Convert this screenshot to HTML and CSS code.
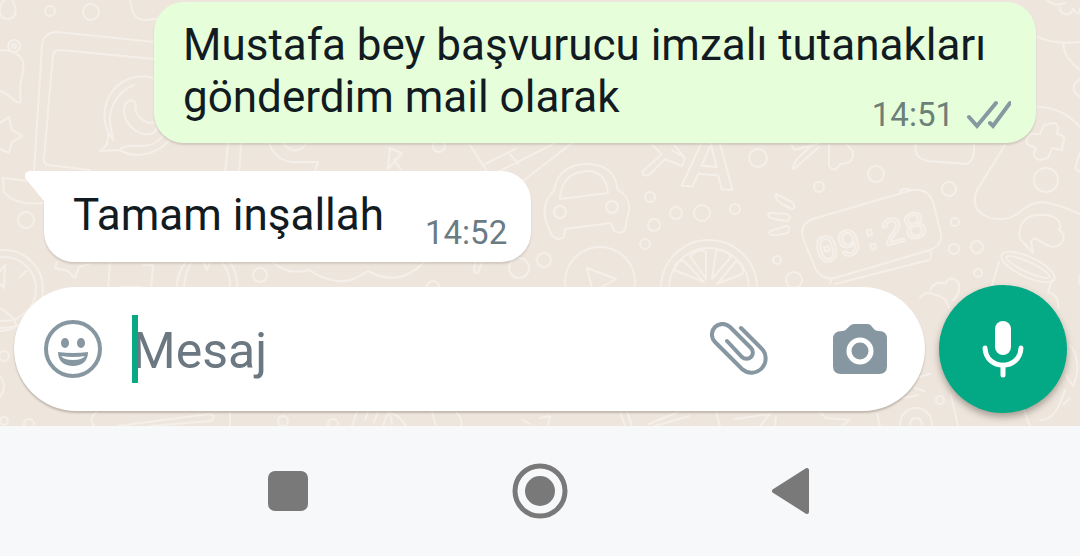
FILE: index.html
```html
<!DOCTYPE html>
<html lang="tr">
<head>
<meta charset="utf-8">
<meta name="viewport" content="width=device-width, initial-scale=1">
<title>Sohbet</title>
<link rel="stylesheet" href="styles.css">
</head>
<body>
<div class="phone">
  <main class="chat">
    <svg class="wallpaper" viewBox="0 0 1080 426" preserveAspectRatio="xMidYMax slice" aria-hidden="true">
      <!-- laptop, ghost, stars and drops -->
      <path d="M4 0C-2 8-2 19 8 19C18 18 17 8 12 0M130 0C132 10 133 20 145 20L165 18M34 172L42 45Q44 32 57 32L165 43M90 170L48 165Q43 164 44 158L53 55Q54 50 60 50L165 60"/>
      <path d="M0 50C10 50 20 53 23 62C26 73 17 80 21 102C13 104 11 94 0 91M0 123L9 117L12 130L22 136L12 142L9 153L0 149"/>
      <path d="M113 140C96 117 106 87 131 78C160 69 184 97 177 124C170 151 141 162 119 150L100 151Q109 146 108 135M113 140L112 133C105 112 116 92 134 85M119 150C124 146 130 145 139 146C153 147 164 139 168 126"/>
      <path d="M126 103C132 97 138 102 135 110Q139 120 149 123C157 121 160 128 153 133C137 140 117 117 126 103Z"/>
      <path d="M228 143L225 174M241 143L239 174M269 143Q275 160 292 162L318 162L314 174M283 143Q295 158 307 143M3 178L4 192Q15 206 44 203M3 178L28 181"/>
      <circle cx="50" cy="11" r="5"/><circle cx="91" cy="12" r="8"/><circle cx="14" cy="46" r="6"/><circle cx="14" cy="46" r="2"/><circle cx="26" cy="220" r="8"/>
      <!-- compass, star and clouds between the bubbles and the composer -->
      <circle cx="4" cy="289" r="39"/><circle cx="4" cy="289" r="32"/><path d="M0 271L5 265L4 288L0 284M20 277L26 271"/>
      <path d="M57 262L55 268L68 271L75 278L79 267L89 264M110 262L108 290M120 287H141M143 265H153L151 290M176 290Q178 270 186 262M184 290Q184 272 192 262M230 262Q239 275 237 290M222 262Q232 276 230 290M203 262L207 270L210 262"/>
      <path d="M273 262Q288 276 309 270Q333 286 354 279L368 271Q399 288 424 262M475 262L474 272L478 273L482 262"/>
      <circle cx="260" cy="275" r="7"/><circle cx="519" cy="268" r="10"/><circle cx="544" cy="260" r="7"/><circle cx="433" cy="287" r="6"/>
      <!-- car and tools -->
      <path d="M389 148L402 153L389 168M390 148L388 169M401 170L394 159M470 145L490 176L555 143M483 165L515 149M510 154L518 164M523 181L572 143"/>
      <path d="M554 191C557 169 574 163 590 164C609 166 615 174 618 190C630 197 631 208 627 218L625 230Q621 235 614 231L611 223L565 229L564 237Q557 242 551 234L545 218Q542 202 554 191ZM560 199C561 179 573 171 590 171Q606 173 608 193Z"/>
      <circle cx="560" cy="212" r="6"/><circle cx="612" cy="207" r="6"/><circle cx="439" cy="146" r="6"/>
      <!-- airplane and letter -->
      <path d="M652 145L662 154L643 171Q642 177 649 175L665 159L682 166L685 158L672 150M685 158L674 145"/>
      <text class="wall-letter" x="682" y="188" transform="rotate(5 710 160)">A</text>
      <circle cx="650" cy="197" r="5"/><circle cx="676" cy="213" r="6"/><circle cx="654" cy="225" r="6"/><circle cx="702" cy="213" r="8"/><circle cx="645" cy="244" r="5"/><circle cx="758" cy="158" r="9"/><circle cx="735" cy="209" r="5"/>
      <!-- play button and orange slice -->
      <circle cx="600" cy="282" r="35"/><path d="M587 268L616 279L593 292Z"/>
      <circle cx="709" cy="288" r="48"/><circle cx="709" cy="288" r="40"/>
      <path d="M704 282L674 270Q676 259 684 261ZM706 279L690 256Q699 247 706 252ZM712 279L716 251Q725 249 731 257ZM717 284L736 261Q746 266 742 274Z"/>
      <!-- digital clock and rays -->
      <path d="M792 145L794 150L820 143M829 145V166Q835 174 840 164C856 164 856 152 847 145M916 145Q913 158 928 161L966 164Q975 161 974 145"/>
      <path d="M795 168L819 147M795 168Q790 172 797 159L811 146"/>
      <path d="M813 219L912 190Q928 188 933 202L941 234Q942 246 930 250L835 278Q821 280 815 268L803 238Q799 224 813 219ZM830 284L832 278M835 284L929 260Q933 257 930 250M900 193Q901 187 910 190"/>
      <text class="wall-clock" x="819" y="264" transform="rotate(-15 819 264)">09:28</text>
      <path d="M776 194Q773 201 792 209Q797 208 792 202ZM769 213Q764 219 788 221Q792 217 787 214ZM770 231Q766 238 788 233Q791 226 786 226Z"/>
      <circle cx="876" cy="174" r="8"/><circle cx="949" cy="189" r="7"/><circle cx="819" cy="187" r="5"/><circle cx="955" cy="222" r="4"/><circle cx="954" cy="249" r="5"/><circle cx="977" cy="247" r="6"/><circle cx="978" cy="273" r="4"/><circle cx="777" cy="260" r="4"/><circle cx="794" cy="280" r="8"/>
      <!-- gamepad, mitten and jar -->
      <path d="M1035 36Q1055 45 1080 42M1063 43Q1064 58 1080 70M1080 79Q1067 87 1080 97M1038 107Q1062 107 1080 127M1005 145L977 190C969 210 985 220 1003 219C1020 218 1024 202 1043 202Q1058 204 1080 214M1047 0Q1055 7 1065 3M1060 8C1060 14 1070 18 1073 9Q1080 18 1080 8"/>
      <path d="M1044 125L1053 123Q1060 123 1057 134Q1067 135 1063 143L1062 150L1052 148L1048 158L1040 160Q1031 158 1036 148L1027 144Q1025 135 1032 134H1040Z"/>
      <path d="M1080 153L1075 168L1080 172M1033 253L1020 239C1017 224 1026 214 1041 215C1058 214 1063 224 1059 230C1068 236 1063 246 1052 247C1042 245 1035 234 1031 241Z"/>
      <ellipse cx="1028" cy="267" rx="29" ry="10" transform="rotate(25 1028 267)"/><ellipse cx="1028" cy="267" rx="24" ry="5" transform="rotate(25 1028 267)"/>
      <path d="M999 262L992 285M1052 280L1048 292Q1060 295 1058 308M1070 345Q1083 362 1073 386L1066 375M1040 420Q1055 422 1065 390M1080 275L1079 284"/>
      <circle cx="1046" cy="180" r="12"/>
      <path d="M930 290Q935 280 945 284Q950 274 958 282Q962 292 953 300M920 298Q925 290 935 295Q946 296 949 308"/>
      <!-- bottom edge -->
      <path d="M0 308C22 322 20 330 0 331M0 376Q8 386 0 397M94 426Q88 418 97 412M118 426L209 414Q217 415 211 421L150 426M230 412V426M357 412L352 426M365 420L368 412M374 422L378 412M383 426L388 412Q400 415 406 426M390 414L392 424M432 412L436 426M456 412Q463 419 461 426M523 420L530 424"/>
      <path d="M540 418L550 416L548 426M620 412L625 426M627 412L632 426M649 424L678 412M655 426L689 416M716 412L720 426M735 419L770 414L760 426M775 426L776 416M820 412L826 418L850 420L842 426M877 414L880 426M951 395L958 426M1030 426L1022 405"/>
      <circle cx="916" cy="424" r="16"/><circle cx="916" cy="424" r="6"/><circle cx="4" cy="421" r="4"/><circle cx="29" cy="424" r="5"/><circle cx="4" cy="356" r="5"/><circle cx="283" cy="421" r="5"/><circle cx="333" cy="424" r="5"/><circle cx="940" cy="400" r="4"/>
      <path d="M916 378L930 374M915 388L924 391M903 398L918 395M1070 398L1064 404"/>
    </svg>

    <article class="bubble sent">
      <p class="message">Mustafa bey başvurucu imzalı tutanakları <span class="meta">
        <time datetime="14:51">14:51</time>
        <svg class="ticks" viewBox="0 0 44 30" role="img" aria-label="İletildi">
          <path d="M2 17L10 26L29 3M23 23L26 26L43 3"/>
        </svg>
      </span>gönderdim mail olarak</p>
    </article>

    <article class="bubble received">
      <svg class="tail" viewBox="0 0 32 34" aria-hidden="true"><path d="M32 0H5C1 0-2 4 1 8L19 30L32 34Z"/></svg>
      <p class="message">Tamam inşallah</p>
      <div class="meta"><time datetime="14:52">14:52</time></div>
    </article>

    <form class="composer">
      <div class="field">
        <button class="icon-button" type="button" aria-label="Emoji">
          <svg class="emoji" viewBox="0 0 58 58">
            <circle class="face" cx="29" cy="29" r="27"/>
            <ellipse cx="21" cy="23" rx="4" ry="5"/><ellipse cx="37" cy="23" rx="4" ry="5"/>
            <path fill-rule="evenodd" d="M14 32Q29 34 44 32C44 41 38 46 29 46S14 41 14 32ZM17 36Q20 40 29 40T41 36Q29 38 17 36Z"/>
          </svg>
        </button>
        <div class="entry">
          <input class="input" type="text" placeholder="Mesaj" aria-label="Mesaj">
          <span class="caret"></span>
        </div>
        <button class="icon-button" type="button" aria-label="Dosya ekle">
          <svg class="clip" viewBox="0 0 58 54">
            <path d="M31 6L51 26A14 14 0 0 1 32 47L5 20A10 10 0 0 1 20 5L41 26A6 6 0 0 1 32 35L17 19"/>
          </svg>
        </button>
        <button class="icon-button" type="button" aria-label="Kamera">
          <svg class="camera" viewBox="0 0 54 52">
            <path d="M9 8C15 8 15 1 22 1H34C40 1 39 8 46 8Q54 8 54 16V43Q54 51 46 51H8Q0 51 0 43V16Q0 8 9 8Z"/>
            <circle class="lens" cx="27" cy="28" r="11"/>
          </svg>
        </button>
      </div>
      <button class="mic-button" type="button" aria-label="Sesli mesaj">
        <svg class="mic" viewBox="0 0 42 58">
          <rect x="13" y="1" width="16" height="34" rx="8"/>
          <path d="M3 28C4 51 38 51 39 28M21 45V55"/>
        </svg>
      </button>
    </form>
  </main>

  <nav class="system-nav" aria-label="Sistem">
    <button class="nav-button" type="button" aria-label="Son uygulamalar">
      <svg viewBox="0 0 56 56"><rect x="8" y="8" width="40" height="40" rx="7"/></svg>
    </button>
    <button class="nav-button" type="button" aria-label="Ana ekran">
      <svg viewBox="0 0 56 56"><circle class="ring" cx="28" cy="28" r="25"/><circle cx="28" cy="28" r="15"/></svg>
    </button>
    <button class="nav-button" type="button" aria-label="Geri">
      <svg viewBox="0 0 56 56"><path class="arrow" d="M43 7V49L10 28Z"/></svg>
    </button>
  </nav>
</div>
</body>
</html>
```

FILE: styles.css
```css
* {
  box-sizing: border-box;
}

body {
  margin: 0;
  font-family: Roboto, "Noto Sans", sans-serif;
  background: #f7f8fa;
  color: #111b21;
}

button,
input {
  font: inherit;
  border: 0;
  padding: 0;
  background: none;
}

svg {
  display: block;
}

.phone {
  min-height: 100vh;
  display: flex;
  flex-direction: column;
}

.chat {
  position: relative;
  isolation: isolate;
  display: flex;
  flex-direction: column;
  align-items: flex-start;
  padding: 2px 13px 13px 14px;
  background: #eee6dd;
  overflow: hidden;
}

.wallpaper {
  position: absolute;
  inset: 0;
  z-index: -1;
  width: 100%;
  height: 100%;
  fill: none;
  stroke: #f5efe9;
  stroke-width: 2;
  stroke-linecap: round;
  stroke-linejoin: round;
}

.wall-letter {
  font-family: "Liberation Sans", sans-serif;
  font-size: 76px;
  font-weight: 700;
}

.wall-clock {
  font-family: "Liberation Mono", monospace;
  font-size: 38px;
}

.bubble {
  position: relative;
  border-radius: 30px;
  box-shadow: 0 2px 2px rgba(60, 50, 40, 0.16);
}

.message {
  margin: 0;
  font-size: 44px;
  line-height: 52px;
}

.meta {
  display: flex;
  align-items: center;
  gap: 13px;
  font-size: 33px;
  line-height: 40px;
  color: #6b7b84;
}

.sent {
  margin: 0 31px 28px 140px;
  padding: 17px 25px 8px 29px;
  background: #e6ffda;
}

.sent .meta {
  float: right;
  margin-top: 24px;
  color: #6c8079;
}

.ticks {
  width: 44px;
  height: 30px;
  fill: none;
  stroke: #8799a0;
  stroke-width: 4;
  stroke-linecap: round;
}

.received {
  display: flex;
  align-items: flex-end;
  gap: 41px;
  margin: 0 0 23px 30px;
  padding: 18px 24px 21px 29px;
  background: #fff;
  border-top-left-radius: 0;
}

.received .meta {
  margin-bottom: -12px;
}

.tail {
  position: absolute;
  top: 0;
  left: -19px;
  width: 32px;
  height: 34px;
  fill: #fff;
}

.composer {
  align-self: stretch;
  display: flex;
  align-items: center;
  gap: 14px;
  margin: 0;
}

.field {
  flex: 1;
  min-width: 0;
  display: flex;
  align-items: center;
  gap: 30px;
  height: 124px;
  padding: 0 38px 0 30px;
  border-radius: 62px;
  background: #fff;
  box-shadow: 0 2px 2px rgba(60, 50, 40, 0.26);
}

.icon-button {
  flex: none;
  fill: #8797a1;
}

.icon-button + .icon-button {
  margin-left: 35px;
}

.emoji {
  width: 58px;
  height: 58px;
}

.face {
  fill: none;
  stroke: #8797a1;
  stroke-width: 4;
}

.entry {
  position: relative;
  flex: 1;
  min-width: 0;
}

.input {
  display: block;
  width: 100%;
  height: 68px;
  padding-top: 4px;
  font-size: 50px;
  color: #111b21;
  outline: 0;
}

.input::placeholder {
  color: #6b7881;
  opacity: 1;
}

.caret {
  position: absolute;
  top: 0;
  left: 0;
  width: 6px;
  height: 68px;
  background: #08a884;
}

.clip {
  width: 58px;
  height: 54px;
  fill: none;
  stroke: #8797a1;
  stroke-width: 4;
  stroke-linecap: round;
}

.camera {
  width: 54px;
  height: 52px;
}

.lens {
  stroke: #fff;
  stroke-width: 5;
}

.mic-button {
  flex: none;
  display: grid;
  place-items: center;
  width: 128px;
  height: 128px;
  border-radius: 50%;
  background: #02a984;
  box-shadow: 0 4px 7px rgba(60, 50, 40, 0.4);
}

.mic {
  width: 42px;
  height: 58px;
  fill: #fff;
}

.mic path {
  fill: none;
  stroke: #fff;
  stroke-width: 5;
  stroke-linecap: round;
}

.system-nav {
  flex: 1;
  display: flex;
  align-items: center;
  justify-content: center;
  gap: 196px;
  min-height: 130px;
  background: #f7f8fa;
}

.nav-button svg {
  width: 56px;
  height: 56px;
  fill: #797979;
}

.nav-button .ring {
  fill: none;
  stroke: #797979;
  stroke-width: 5;
}

.arrow {
  stroke: #797979;
  stroke-width: 4;
  stroke-linejoin: round;
}
```
